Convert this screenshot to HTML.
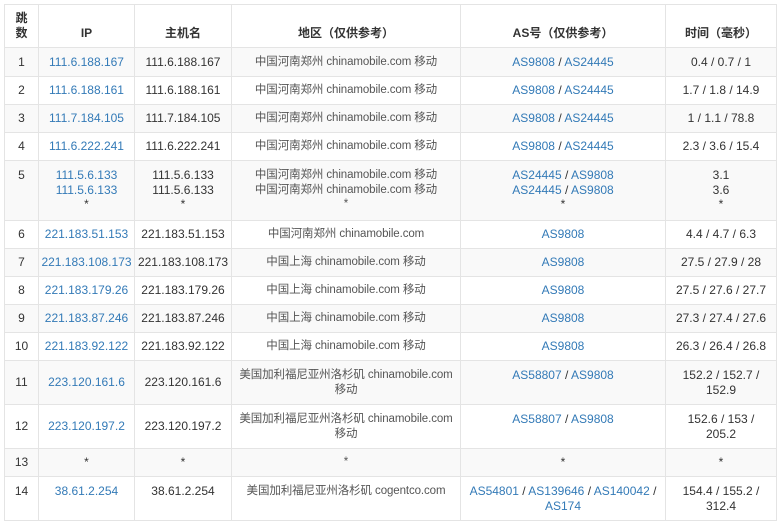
<!DOCTYPE html>
<html><head><meta charset="utf-8"><style>
body{margin:0;background:#fff;font-family:"Liberation Sans","Noto Sans CJK SC",sans-serif;font-size:12px;color:#333}
table{position:absolute;left:4px;top:4px;border-collapse:collapse;table-layout:fixed;width:772px}
td,th{border:1px solid #e4e4e4;text-align:center;vertical-align:middle;padding:0 1px;line-height:15px;white-space:nowrap;overflow:hidden}
th{font-weight:bold;vertical-align:bottom;padding-bottom:6px;color:#333}
tbody tr:nth-child(odd){background:#f9f9f9}
a{color:#337ab7;text-decoration:none}
.l{color:#555;font-size:11.5px;letter-spacing:-0.1px}
.t{vertical-align:top;padding-top:7px;line-height:14.5px}
</style></head><body>
<table>
<colgroup><col style="width:34px"><col style="width:96px"><col style="width:97px"><col style="width:229px"><col style="width:205px"><col style="width:111px"></colgroup>
<thead><tr style="height:43px"><th>跳<br>数</th><th>IP</th><th>主机名</th><th>地区（仅供参考）</th><th>AS号（仅供参考）</th><th>时间（毫秒）</th></tr></thead>
<tbody>
<tr style="height:29px"><td>1</td><td><a>111.6.188.167</a></td><td>111.6.188.167</td><td class="l">中国河南郑州 chinamobile.com 移动</td><td><a>AS9808</a> / <a>AS24445</a></td><td>0.4 / 0.7 / 1</td></tr>
<tr style="height:28px"><td>2</td><td><a>111.6.188.161</a></td><td>111.6.188.161</td><td class="l">中国河南郑州 chinamobile.com 移动</td><td><a>AS9808</a> / <a>AS24445</a></td><td>1.7 / 1.8 / 14.9</td></tr>
<tr style="height:28px"><td>3</td><td><a>111.7.184.105</a></td><td>111.7.184.105</td><td class="l">中国河南郑州 chinamobile.com 移动</td><td><a>AS9808</a> / <a>AS24445</a></td><td>1 / 1.1 / 78.8</td></tr>
<tr style="height:28px"><td>4</td><td><a>111.6.222.241</a></td><td>111.6.222.241</td><td class="l">中国河南郑州 chinamobile.com 移动</td><td><a>AS9808</a> / <a>AS24445</a></td><td>2.3 / 3.6 / 15.4</td></tr>
<tr style="height:60px"><td class="t">5</td><td class="t"><a>111.5.6.133</a><br><a>111.5.6.133</a><br>*</td><td class="t">111.5.6.133<br>111.5.6.133<br>*</td><td class="l t">中国河南郑州 chinamobile.com 移动<br>中国河南郑州 chinamobile.com 移动<br>*</td><td class="t"><a>AS24445</a> / <a>AS9808</a><br><a>AS24445</a> / <a>AS9808</a><br>*</td><td class="t">3.1<br>3.6<br>*</td></tr>
<tr style="height:28px"><td>6</td><td><a>221.183.51.153</a></td><td>221.183.51.153</td><td class="l">中国河南郑州 chinamobile.com</td><td><a>AS9808</a></td><td>4.4 / 4.7 / 6.3</td></tr>
<tr style="height:28px"><td>7</td><td><a>221.183.108.173</a></td><td>221.183.108.173</td><td class="l">中国上海 chinamobile.com 移动</td><td><a>AS9808</a></td><td>27.5 / 27.9 / 28</td></tr>
<tr style="height:28px"><td>8</td><td><a>221.183.179.26</a></td><td>221.183.179.26</td><td class="l">中国上海 chinamobile.com 移动</td><td><a>AS9808</a></td><td>27.5 / 27.6 / 27.7</td></tr>
<tr style="height:28px"><td>9</td><td><a>221.183.87.246</a></td><td>221.183.87.246</td><td class="l">中国上海 chinamobile.com 移动</td><td><a>AS9808</a></td><td>27.3 / 27.4 / 27.6</td></tr>
<tr style="height:28px"><td>10</td><td><a>221.183.92.122</a></td><td>221.183.92.122</td><td class="l">中国上海 chinamobile.com 移动</td><td><a>AS9808</a></td><td>26.3 / 26.4 / 26.8</td></tr>
<tr style="height:44px"><td>11</td><td><a>223.120.161.6</a></td><td>223.120.161.6</td><td class="l">美国加利福尼亚州洛杉矶 chinamobile.com<br>移动</td><td><a>AS58807</a> / <a>AS9808</a><br>&nbsp;</td><td>152.2 / 152.7 /<br>152.9</td></tr>
<tr style="height:44px"><td>12</td><td><a>223.120.197.2</a></td><td>223.120.197.2</td><td class="l">美国加利福尼亚州洛杉矶 chinamobile.com<br>移动</td><td><a>AS58807</a> / <a>AS9808</a><br>&nbsp;</td><td>152.6 / 153 /<br>205.2</td></tr>
<tr style="height:28px"><td>13</td><td>*</td><td>*</td><td class="l">*</td><td>*</td><td>*</td></tr>
<tr style="height:44px"><td>14<br>&nbsp;</td><td><a>38.61.2.254</a><br>&nbsp;</td><td>38.61.2.254<br>&nbsp;</td><td class="l">美国加利福尼亚州洛杉矶 cogentco.com<br>&nbsp;</td><td><a>AS54801</a> / <a>AS139646</a> / <a>AS140042</a> /<br><a>AS174</a></td><td>154.4 / 155.2 /<br>312.4</td></tr>
</tbody></table>
</body></html>
